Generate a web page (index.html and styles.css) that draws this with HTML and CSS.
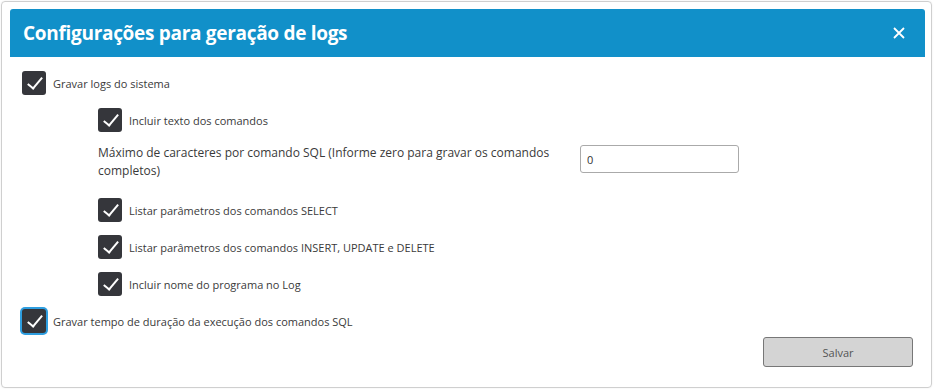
FILE: index.html
```html
<!DOCTYPE html>
<html lang="pt-BR">
<head>
    <meta charset="UTF-8">
    <meta name="viewport" content="width=device-width, initial-scale=1.0">
    <title>Configurações para geração de logs</title>
    <link rel="stylesheet" href="styles.css">
</head>
<body>
    <div class="dialog">
        <div class="dialog-header">
            <h2>Configurações para geração de logs</h2>
            <button class="close" type="button" aria-label="Fechar">
                <svg width="12" height="12" viewBox="0 0 12 12">
                    <path d="M1 1 L11 11 M11 1 L1 11" stroke="#fff" stroke-width="1.8" fill="none"/>
                </svg>
            </button>
        </div>

        <form class="dialog-body">
            <label class="check">
                <input type="checkbox" checked>
                <span class="box"></span>
                <span>Gravar logs do sistema</span>
            </label>

            <div class="sub-options">
                <label class="check">
                    <input type="checkbox" checked>
                    <span class="box"></span>
                    <span>Incluir texto dos comandos</span>
                </label>

                <div class="field-row">
                    <label for="maxChars">Máximo de caracteres por comando SQL (Informe zero para gravar os comandos completos)</label>
                    <input type="text" id="maxChars" value="0">
                </div>

                <label class="check">
                    <input type="checkbox" checked>
                    <span class="box"></span>
                    <span>Listar parâmetros dos comandos SELECT</span>
                </label>
                <label class="check">
                    <input type="checkbox" checked>
                    <span class="box"></span>
                    <span>Listar parâmetros dos comandos INSERT, UPDATE e DELETE</span>
                </label>
                <label class="check">
                    <input type="checkbox" checked>
                    <span class="box"></span>
                    <span>Incluir nome do programa no Log</span>
                </label>
            </div>

            <label class="check focused">
                <input type="checkbox" checked>
                <span class="box"></span>
                <span>Gravar tempo de duração da execução dos comandos SQL</span>
            </label>

            <div class="actions">
                <button type="submit" class="save">Salvar</button>
            </div>
        </form>
    </div>
</body>
</html>
```

FILE: styles.css
```css
body {
    font-family: "Open Sans", Arial, sans-serif;
    margin: 0;
    padding: 1px;
    background-color: #fff;
    color: #3a3a3a;
}

.dialog {
    width: 931px;
    height: 387px;
    border: 1px solid #cfcfcf;
    border-radius: 4px;
    padding: 7px 6px 0 8px;
    box-sizing: border-box;
    box-shadow: 0 0 2px rgba(0,0,0,0.08);
}

.dialog-header {
    display: flex;
    align-items: center;
    justify-content: space-between;
    height: 48px;
    background-color: #1190c9;
    border-radius: 3px 3px 0 0;
    padding: 0 20px 0 13px;
}

.dialog-header h2 {
    margin: 0;
    color: #fff;
    font-size: 19px;
    font-weight: 700;
    letter-spacing: -0.3px;
}

.close {
    background: none;
    border: none;
    padding: 0;
    width: 12px;
    height: 12px;
    cursor: pointer;
    display: flex;
}

.dialog-body {
    padding: 14px 12px 0 12px;
    font-size: 11px;
}

.check {
    display: flex;
    align-items: center;
    gap: 7px;
    height: 24px;
    margin-bottom: 13px;
    cursor: pointer;
}

.check input {
    display: none;
}

.box {
    width: 24px;
    height: 24px;
    border-radius: 3px;
    background-color: #35363b;
    flex-shrink: 0;
    position: relative;
}

.box::after {
    content: "";
    position: absolute;
    left: 9px;
    top: 3px;
    width: 6px;
    height: 13px;
    border: solid #fff;
    border-width: 0 2px 2px 0;
    transform: rotate(40deg);
}

.check.focused .box {
    box-shadow: 0 0 0 2px #2e9ee0;
}

.sub-options {
    padding-left: 76px;
}

.field-row {
    display: flex;
    align-items: flex-start;
    gap: 12px;
    margin: -1px 0 18px;
}

.field-row label {
    width: 470px;
    font-size: 12px;
    line-height: 18px;
}

.field-row input {
    width: 159px;
    height: 28px;
    margin-top: 1px;
    box-sizing: border-box;
    border: 1px solid #aaa;
    border-radius: 3px;
    padding: 0 6px;
    font-family: inherit;
    font-size: 11px;
    color: #333;
}

.actions {
    display: flex;
    justify-content: flex-end;
    margin-top: -9px;
}

.save {
    width: 150px;
    height: 30px;
    background-color: #d4d4d4;
    border: 1px solid #777;
    border-radius: 3px;
    font-family: inherit;
    font-size: 11px;
    color: #555;
    cursor: pointer;
}
```
